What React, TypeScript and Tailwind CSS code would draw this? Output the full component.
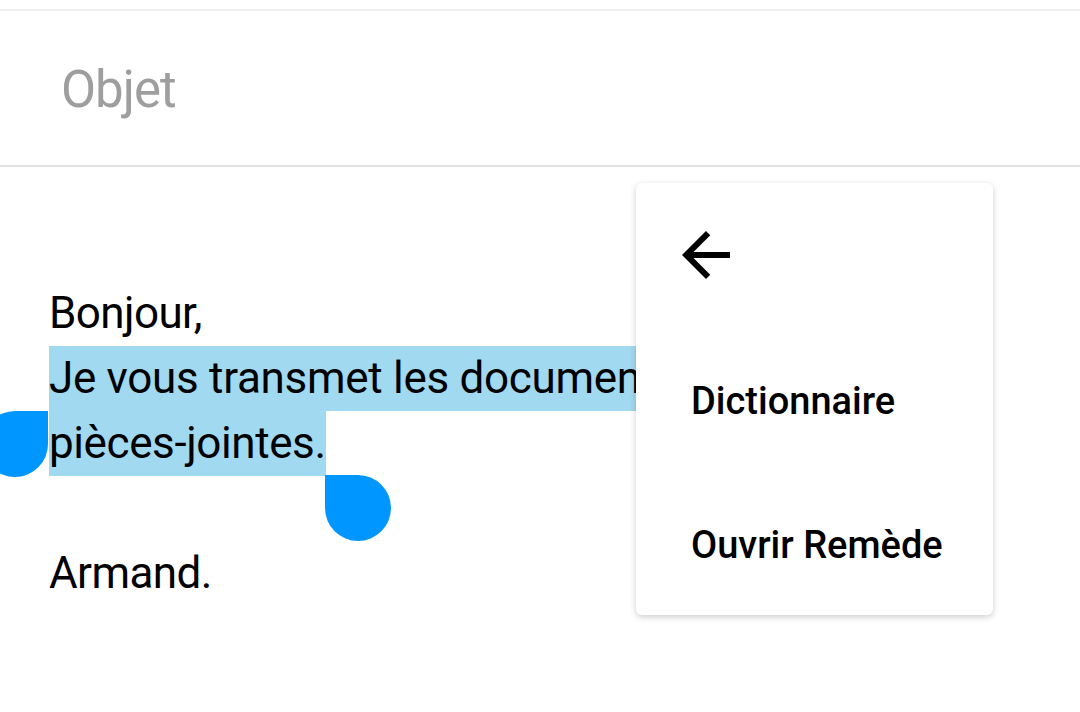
import React from 'react';

const font = { fontFamily: 'Roboto, "Noto Sans", sans-serif' };

const BackArrow: React.FC = () => (
  <svg width="72" height="72" viewBox="0 0 24 24" fill="#000">
    <path d="M20 11H7.83l5.59-5.59L12 4l-8 8 8 8 1.41-1.41L7.83 13H20v-2z" />
  </svg>
);

export default function App() {
  return (
    <div className="relative w-[1080px] h-[712px] overflow-hidden bg-white" style={font}>
      <div className="mt-[9px] border-t-2 border-[#efefef]" />

      {/* Subject field */}
      <div className="h-[156px] flex items-center pl-[61px] border-b-2 border-[#e2e2e2]">
        <span className="text-[51px] tracking-[-1px] text-[#9e9e9e] pt-[5px]">Objet</span>
      </div>

      {/* Body */}
      <div className="pt-[114px] pl-[49px] text-[44px] tracking-[-0.6px] leading-[65px] text-black">
        <div>Bonjour,</div>
        <div>
          <span className="inline-block bg-[#a1d9f0] tracking-[-0.3px]">Je vous transmet les documents en</span>
        </div>
        <div>
          <span className="inline-block bg-[#a1d9f0] tracking-[-0.4px]">pièces-jointes.</span>
        </div>
        <div className="h-[65px]" />
        <div>Armand.</div>
      </div>

      {/* Selection handles */}
      <div className="absolute left-[-18px] top-[411px] w-[66px] h-[66px] bg-[#0096ff] rounded-full rounded-tr-none" />
      <div className="absolute left-[325px] top-[475px] w-[66px] h-[66px] bg-[#0096ff] rounded-full rounded-tl-none" />

      {/* Floating text selection menu */}
      <div className="absolute left-[636px] top-[183px] w-[357px] bg-white rounded-md shadow-[0_2px_6px_rgba(0,0,0,0.2)]">
        <div className="h-[144px] flex items-center pl-[34px]">
          <BackArrow />
        </div>
        <div className="h-[144px] flex items-center pl-[55px] pt-[4px] text-[38px] font-medium text-black">
          Dictionnaire
        </div>
        <div className="h-[144px] flex items-center pl-[55px] pt-[4px] text-[38px] font-medium text-black">
          Ouvrir Remède
        </div>
      </div>
    </div>
  );
}
